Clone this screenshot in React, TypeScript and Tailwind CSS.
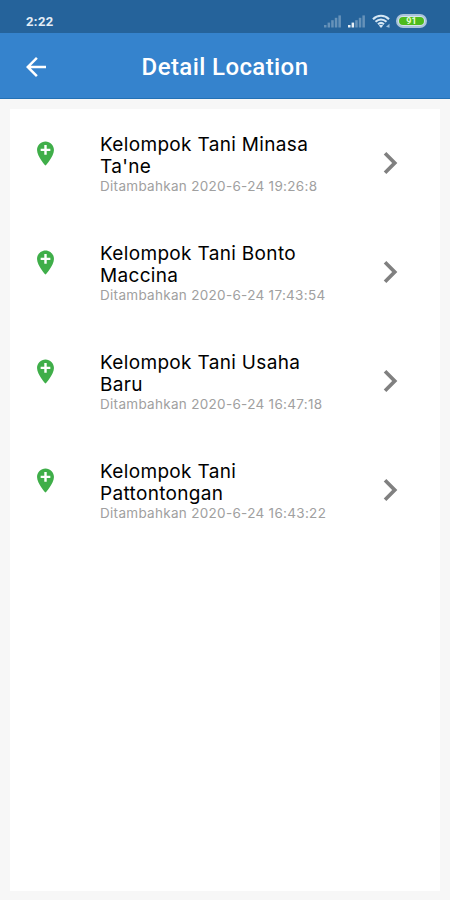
import React from "react";
import { MdArrowBack, MdAddLocation, MdChevronRight } from "react-icons/md";

const locations = [
  { id: 1, lines: ["Kelompok Tani Minasa", "Ta'ne"], added: "2020-6-24 19:26:8" },
  { id: 2, lines: ["Kelompok Tani Bonto", "Maccina"], added: "2020-6-24 17:43:54" },
  { id: 3, lines: ["Kelompok Tani Usaha", "Baru"], added: "2020-6-24 16:47:18" },
  { id: 4, lines: ["Kelompok Tani", "Pattontongan"], added: "2020-6-24 16:43:22" },
];

function Signal({ active }: { active: number }) {
  return (
    <svg width="18" height="13" viewBox="0 0 18 13" fill="#fff">
      {[0, 1, 2, 3, 4].map((i) => (
        <rect
          key={i}
          x={i * 3.6}
          y={10 - i * 2.4}
          width="2.5"
          height={2.5 + i * 2.4}
          opacity={i < active ? 0.9 : 0.3}
        />
      ))}
    </svg>
  );
}

function StatusBar() {
  return (
    <div className="flex h-[33px] items-center bg-[#25639b] pt-[9px] pr-[23px] pl-[26px]">
      <span className="text-[13px] font-bold leading-none tracking-[0.4px] text-[#e3edf6]">2:22</span>
      <div className="ml-auto flex items-center">
        <Signal active={0} />
        <span className="w-[6px]" />
        <Signal active={2} />
        <svg className="ml-[6px]" width="20" height="15" viewBox="0 0 20 15" fill="none">
          <g stroke="#d5e7f4" strokeWidth="2.1">
            <path d="M1 5.2C5.5.6 12.5.6 17 5.2" />
            <path d="M3.5 7.8C6.7 4.7 11.3 4.7 14.5 7.8" />
            <path d="M6 10.3C7.8 8.6 10.2 8.6 12 10.3" />
          </g>
          <path d="M6.8 11.5Q9 9.8 11.2 11.5L9 14Z" fill="#d5e7f4" />
          <path d="M14 12.8l3.5-3v4z" fill="#9dc0de" />
        </svg>
        <div className="ml-[4px] flex h-[14px] w-[31px] items-center justify-center rounded-full border-2 border-[#a9c3da] bg-[#d5e2ee] p-px">
          <div className="flex h-full w-full items-center justify-center rounded-full bg-[#4dbb1d] text-[9px] font-bold leading-none text-[#e5ffd3]">
            91
          </div>
        </div>
      </div>
    </div>
  );
}

export default function App() {
  return (
    <div className="flex h-[900px] w-[450px] flex-col overflow-hidden bg-[#f7f7f7] font-['Roboto',sans-serif]">
      <StatusBar />

      <header className="grid h-[66px] shrink-0 grid-cols-[51px_1fr_51px] items-center border-b border-[#2371b5] bg-[#3583cd] text-white">
        <MdArrowBack className="mt-[2px] ml-[21px]" size={30} />
        <h1 className="pt-[3px] text-center text-[24px] font-medium leading-none tracking-[0.4px]">Detail Location</h1>
      </header>

      {/* Location list */}
      <main className="mx-[10px] mt-[10px] mb-[9px] flex-1 bg-white pt-[25px]">
        {locations.map((item) => (
          <div key={item.id} className="flex h-[109px] items-start">
            <MdAddLocation className="mt-[5px] ml-[21px] shrink-0" size={29} color="#3fae49" />
            <div className="ml-[40px] w-[268px] whitespace-nowrap font-['Inter',sans-serif]">
              <h2 className="text-[19px] leading-[22px] tracking-[0.33px] text-black">
                {item.lines.map((line) => (
                  <span key={line} className="block">
                    {line}
                  </span>
                ))}
              </h2>
              <p className="text-[13.5px] leading-[16px] tracking-[0.3px] text-[#a0a0a0]">Ditambahkan {item.added}</p>
            </div>
            <MdChevronRight className="mt-[7px] shrink-0" size={44} color="#808080" />
          </div>
        ))}
      </main>
    </div>
  );
}
